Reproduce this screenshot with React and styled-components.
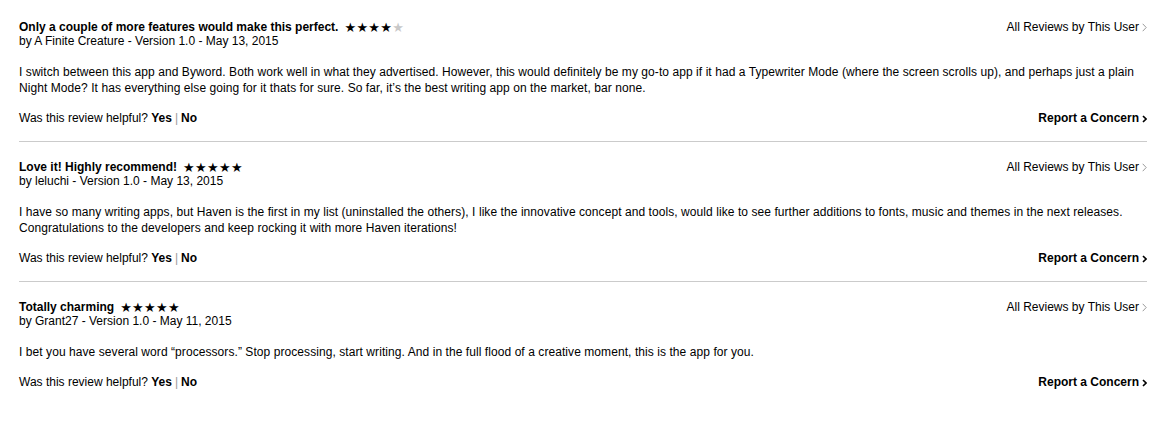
import React from "react";
import styled, { createGlobalStyle } from "styled-components";

const GlobalStyle = createGlobalStyle`
  body {
    margin: 0;
    background: #fff;
    font-family: "Liberation Sans", Arial, Helvetica, sans-serif;
    color: #000;
  }
`;

const Page = styled.div`
  padding: 2px 27px 0 19px;
`;

const Review = styled.section`
  padding: 17px 0 15px;
  border-bottom: 1px solid ${(p) => (p.last ? "transparent" : "#cbcbcb")};
`;

const Head = styled.div`
  display: flex;
  justify-content: space-between;
  align-items: flex-start;
`;

const Title = styled.h3`
  margin: 0 0 -1px;
  padding-top: 1px;
  font-size: 12px;
  line-height: 15px;
  font-weight: bold;
`;

const Stars = styled.span`
  display: inline-block;
  vertical-align: top;
  font-family: "DejaVu Sans", sans-serif;
  font-weight: normal;
  font-size: 13px;
  line-height: 15px;
  height: 15px;
  margin-left: 6px;
  letter-spacing: 0.3px;
`;

const Star = styled.span`
  color: ${(p) => (p.off ? "#c8c8c8" : "#000")};
`;

const Byline = styled.div`
  font-size: 12px;
  line-height: 15px;
`;

const UserLink = styled.a`
  display: flex;
  align-items: center;
  gap: 3px;
  margin-top: 1px;
  font-size: 12px;
  line-height: 15px;
  color: #000;
  text-decoration: none;
`;

const Body = styled.p`
  margin: 15px 0 0;
  font-size: 12px;
  line-height: 16px;
  letter-spacing: 0.07px;
`;

const Foot = styled.div`
  margin-top: 15px;
  display: flex;
  justify-content: space-between;
  font-size: 12px;
  line-height: 15px;
`;

const Vote = styled.b`
  font-weight: bold;
`;

const Bar = styled.span`
  color: #999;
  margin: 0 3px;
`;

const Concern = styled.a`
  display: flex;
  align-items: center;
  gap: 3px;
  font-weight: bold;
  color: #000;
  text-decoration: none;
`;

const Chevron = ({ bold }) =>
  bold ? (
    <svg width="5" height="8" viewBox="0 0 5 8">
      <path d="M1 1l3 3-3 3" fill="none" stroke="#000" strokeWidth="1.6" />
    </svg>
  ) : (
    <svg width="5" height="9" viewBox="0 0 5 9">
      <path d="M0.7 0.8l3.5 3.7-3.5 3.7" fill="none" stroke="#9a9a9a" strokeWidth="1" />
    </svg>
  );

const reviews = [
  {
    title: "Only a couple of more features would make this perfect.",
    rating: 4,
    by: "by A Finite Creature - Version 1.0 - May 13, 2015",
    text:
      "I switch between this app and Byword. Both work well in what they advertised. However, this would definitely be my go-to app if it had a Typewriter Mode (where the screen scrolls up), and perhaps just a plain Night Mode? It has everything else going for it thats for sure. So far, it’s the best writing app on the market, bar none.",
  },
  {
    title: "Love it! Highly recommend!",
    rating: 5,
    by: "by leluchi - Version 1.0 - May 13, 2015",
    text:
      "I have so many writing apps, but Haven is the first in my list (uninstalled the others), I like the innovative concept and tools, would like to see further additions to fonts, music and themes in the next releases. Congratulations to the developers and keep rocking it with more Haven iterations!",
  },
  {
    title: "Totally charming",
    rating: 5,
    by: "by Grant27 - Version 1.0 - May 11, 2015",
    text:
      "I bet you have several word “processors.” Stop processing, start writing. And in the full flood of a creative moment, this is the app for you.",
  },
];

const App = () => (
  <>
    <GlobalStyle />
    <Page>
      {reviews.map((r, i) => (
        <Review key={i} last={i === reviews.length - 1}>
          <Head>
            <div>
              <Title>
                {r.title}
                <Stars>
                  {[0, 1, 2, 3, 4].map((s) => (
                    <Star key={s} off={s >= r.rating}>
                      ★
                    </Star>
                  ))}
                </Stars>
              </Title>
              <Byline>{r.by}</Byline>
            </div>
            <UserLink href="#">
              All Reviews by This User <Chevron />
            </UserLink>
          </Head>
          <Body>{r.text}</Body>
          <Foot>
            <span>
              Was this review helpful? <Vote>Yes</Vote>
              <Bar>|</Bar>
              <Vote>No</Vote>
            </span>
            <Concern href="#">
              Report a Concern <Chevron bold />
            </Concern>
          </Foot>
        </Review>
      ))}
    </Page>
  </>
);

export default App;
